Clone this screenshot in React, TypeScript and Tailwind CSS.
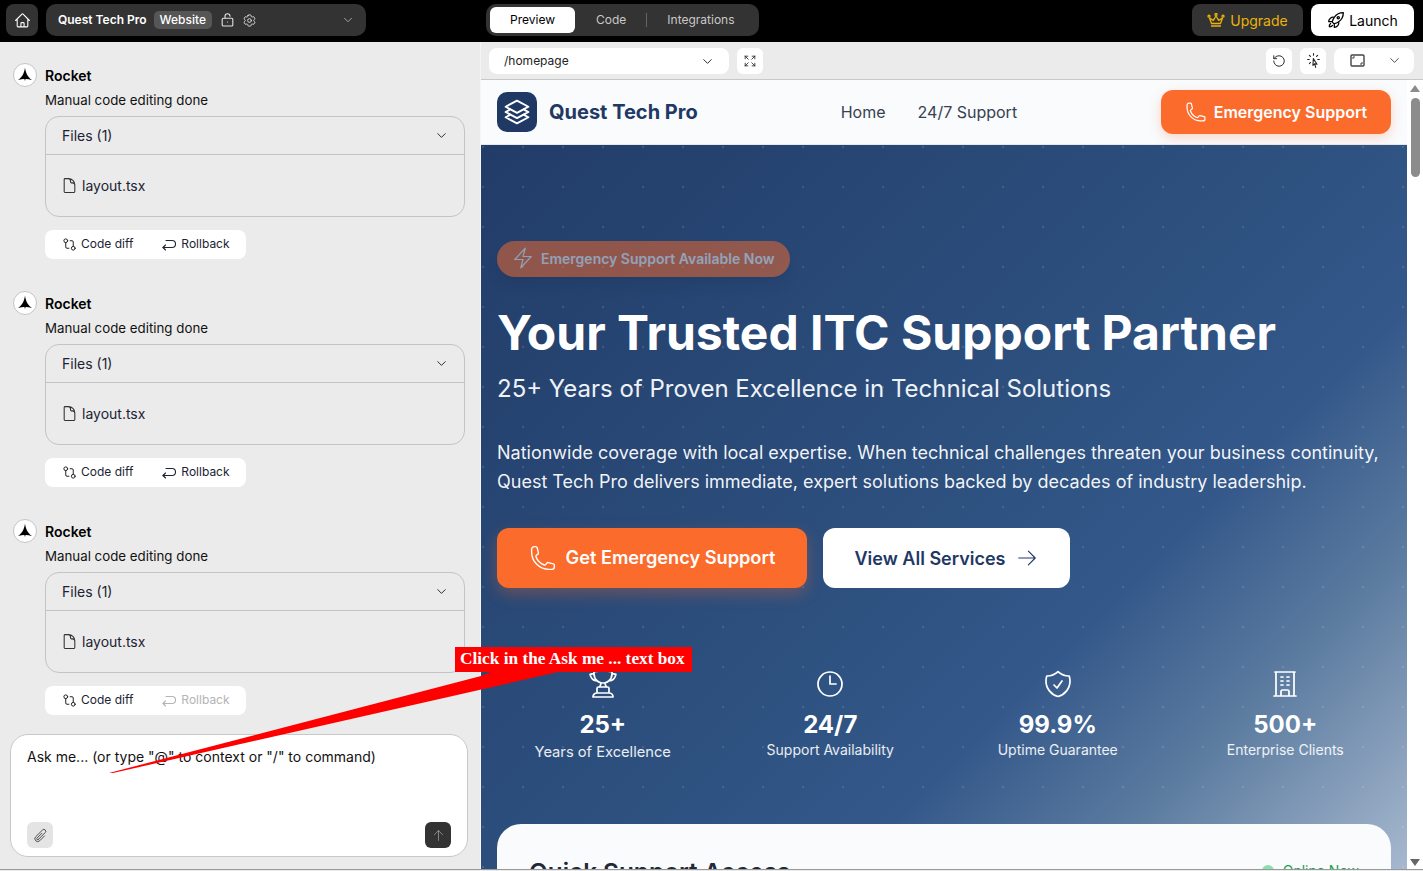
import React from "react";
import { RotateCcw, GitCompare, ChevronDown } from "lucide-react";
import {
  HiOutlineClock, HiOutlineShieldCheck, HiOutlineBuildingOffice, HiOutlineTrophy, HiOutlinePhone,
  HiOutlineBolt, HiOutlineArrowRight, HiOutlineSquare3Stack3D, HiOutlineHome, HiOutlineCog6Tooth,
  HiOutlineDocument, HiOutlineArrowsPointingOut, HiOutlineCursorArrowRays, HiOutlineRocketLaunch,
  HiOutlinePaperClip, HiOutlineArrowUp,
} from "react-icons/hi2";

function RocketMark() {
  return (
    <svg width="18" height="18" viewBox="0 0 18 18">
      <path d="M9 1.5 C9.6 6 11 10.5 16 14 C13 13.2 11 13 9.6 13 L9 15 L8.4 13 C7 13 5 13.2 2 14 C7 10.5 8.4 6 9 1.5Z" fill="#000" />
    </svg>
  );
}

function RollbackIcon() {
  return (
    <svg width="14" height="14" viewBox="0 0 14 14" fill="none" stroke="currentColor" strokeWidth="1.1" strokeLinecap="round" strokeLinejoin="round">
      <path d="M3.5 8 L1 10.5 L3.5 13" />
      <path d="M1 10.5 H10 A3.5 3.5 0 0 0 10 3.5 H4" />
    </svg>
  );
}

function ResizeIcon() {
  return (
    <svg width="15" height="13" viewBox="0 0 15 13" fill="none" stroke="#444" strokeWidth="1.4">
      <rect x="1" y="1" width="13" height="11" rx="1" />
      <path d="M3 5 V3 H5 M12 8 V10 H10" strokeWidth="1" />
    </svg>
  );
}

function OpenLock() {
  return (
    <svg width="13" height="14" viewBox="0 0 13 14" fill="none" stroke="#e2e2e2" strokeWidth="1.1" strokeLinecap="round">
      <rect x="1.2" y="5.2" width="10.6" height="7.8" rx="1" />
      <path d="M4 5 V3.2 A2.5 2.5 0 0 1 9 3.2" />
      <circle cx="6.5" cy="9" r="0.6" fill="#e2e2e2" stroke="none" />
    </svg>
  );
}

function CrownIcon() {
  return (
    <svg width="18" height="15" viewBox="0 0 18 15" fill="none" stroke="currentColor" strokeWidth="1.3" strokeLinejoin="round" strokeLinecap="round">
      <path d="M2.5 5 L4.5 10.5 H13.5 L15.5 5 L11.7 7.4 L9 3 L6.3 7.4 Z" />
      <path d="M4.5 13 H13.5" />
      <circle cx="2" cy="3.2" r="1" />
      <circle cx="9" cy="1.4" r="1" />
      <circle cx="16" cy="3.2" r="1" />
    </svg>
  );
}

function Message({ disabled }: { disabled?: boolean }) {
  return (
    <div className="flex gap-2">
      <div className="flex h-6 w-6 shrink-0 items-center justify-center rounded-full border border-[#c4c4c4] bg-white">
        <RocketMark />
      </div>
      <div className="flex flex-1 flex-col">
        <div className="mt-[4px] h-[18px] text-[14px] leading-[18px] font-semibold text-black">Rocket</div>
        <div className="mt-[6px] h-[18px] text-[13.3px] leading-[18px] text-[#111]">Manual code editing done</div>
        <div className="mt-[7px] rounded-[14px] border border-[#c4c4c4]">
          <div className="flex h-[38px] items-center justify-between border-b border-[#c4c4c4] pr-[15px] pl-[16px] text-[14px] text-[#1c2333]">
            <span>Files (1)</span>
            <ChevronDown size={15} strokeWidth={1.5} />
          </div>
          <div className="flex h-[61px] items-center gap-[4px] pl-[15px] text-[14px] text-[#1c2333]">
            <HiOutlineDocument size={17} className="text-[#333]" />
            <span>layout.tsx</span>
          </div>
        </div>
        <div className="mt-[13px] flex h-[29px] w-[201px] items-center rounded-[8px] bg-white pb-px pl-[17px] text-[12px] text-[#1c2333]">
          <GitCompare size={15} strokeWidth={1.6} className="mr-[4px] text-[#222]" />
          <span>Code diff</span>
          <span className={`ml-[29px] flex items-center gap-[5px] ${disabled ? "text-[#b4b4b4]" : ""}`}>
            <RollbackIcon />
            <span>Rollback</span>
          </span>
        </div>
      </div>
    </div>
  );
}

function Stat({ icon, value, label, first }: { icon: React.ReactNode; value: string; label: string; first?: boolean }) {
  return (
    <div className="flex flex-col items-center text-white">
      <div className="h-8">{icon}</div>
      <div className="mt-[9px] text-[24px] leading-8 font-bold">{value}</div>
      {first ? (
        <div className="mt-[1px] text-[14.7px] leading-5 text-white/90">{label}</div>
      ) : (
        <div className="-mt-px text-[14px] leading-5 text-white/90">{label}</div>
      )}
    </div>
  );
}

export default function App() {
  return (
    <div className="relative flex h-screen w-full flex-col overflow-hidden bg-[#ebebeb] pb-px font-['Inter',sans-serif]">
      <header className="flex h-[42px] shrink-0 items-center bg-black pr-[9px] pb-[2px] pl-[6px]">
        <button className="flex h-8 w-8 items-center justify-center rounded-[8px] bg-[#333] text-white">
          <HiOutlineHome size={17} />
        </button>
        <div className="ml-[8px] flex h-8 w-[320px] items-center rounded-[10px] bg-[#333] pr-[11px] pl-[12px] text-white">
          <span className="text-[12px] font-semibold">Quest Tech Pro</span>
          <span className="ml-[7px] rounded-[5px] bg-[#565656] px-[6px] py-[1px] text-[12px] leading-[16px] font-medium">Website</span>
          <span className="ml-[9px] flex"><OpenLock /></span>
          <HiOutlineCog6Tooth size={15} className="ml-[8px] text-[#ddd]" />
          <ChevronDown size={14} strokeWidth={1.4} className="ml-auto text-[#bbb]" />
        </div>
        <div className="ml-[120px] flex h-8 w-[273px] items-center rounded-[10px] bg-[#333] pl-[4px] text-[12px] text-[#c8c8c8]">
          <span className="flex h-[26px] w-[85px] items-center justify-center rounded-[6px] bg-white text-black">Preview</span>
          <span className="ml-[21px]">Code</span>
          <span className="ml-[20px] h-[14px] w-px bg-[#666]" />
          <span className="ml-[20px]">Integrations</span>
        </div>
        <button className="ml-auto flex h-8 w-[111px] items-center justify-center gap-[5px] rounded-[8px] bg-[#333] text-[14px] text-[#eab308]">
          <CrownIcon />
          <span className="mt-px">Upgrade</span>
        </button>
        <button className="ml-[8px] flex h-8 w-[103px] items-center justify-center gap-[4px] rounded-[8px] bg-white text-[14px] text-black">
          <HiOutlineRocketLaunch size={18} strokeWidth={1.7} />
          <span className="mt-px">Launch</span>
        </button>
      </header>

      <div className="flex min-h-0 flex-1 border-b border-[#999]">
        <aside className="flex w-[480px] shrink-0 flex-col">
          <div className="flex flex-1 flex-col gap-[32px] overflow-hidden pt-[21px] pr-[15px] pl-[13px]">
            <Message />
            <Message />
            <Message disabled />
          </div>
          <div className="mr-[12px] mb-[12px] ml-[10px] flex h-[123px] flex-col rounded-[18px] border border-[#c8c8c8] bg-white px-[16px] pt-[13px] pb-[8px]">
            <div className="text-[14px] leading-[18px] text-[#111]">Ask me... (or type "@" to context or "/" to command)</div>
            <div className="mt-auto flex items-center justify-between">
              <span className="flex h-[26px] w-[26px] items-center justify-center rounded-[6px] bg-[#e4e4e4] text-[#444]">
                <HiOutlinePaperClip size={15} />
              </span>
              <span className="flex h-[26px] w-[26px] items-center justify-center rounded-[6px] bg-[#333] text-[#999]">
                <HiOutlineArrowUp size={13} />
              </span>
            </div>
          </div>
        </aside>

        <main className="flex min-w-0 flex-1 flex-col border-l border-[#f5f5f5]">
          <div className="flex h-[38px] shrink-0 items-center border-b border-[#c8c8c8] pr-[9px] pl-[8px]">
            <div className="flex h-[26px] w-[240px] items-center justify-between rounded-[8px] bg-white pt-px pr-[14px] pl-[15px] text-[12px] text-[#222]">
              <span>/homepage</span>
              <ChevronDown size={15} strokeWidth={1.5} />
            </div>
            <span className="ml-[8px] flex h-[26px] w-[26px] items-center justify-center rounded-[6px] bg-white text-[#333]">
              <HiOutlineArrowsPointingOut size={14} />
            </span>
            <span className="ml-auto flex h-[26px] w-[26px] items-center justify-center rounded-[6px] bg-white text-[#222]">
              <RotateCcw size={14} strokeWidth={1.6} />
            </span>
            <span className="ml-[8px] flex h-[26px] w-[26px] items-center justify-center rounded-[6px] bg-white text-[#222]">
              <HiOutlineCursorArrowRays size={17} />
            </span>
            <span className="ml-[8px] flex h-[26px] w-[80px] items-center justify-between rounded-[8px] bg-white pr-[12px] pl-[16px]">
              <ResizeIcon />
              <ChevronDown size={15} strokeWidth={1.5} className="text-[#444]" />
            </span>
          </div>

          <div className="flex min-h-0 flex-1">
            <div className="min-w-0 flex-1 overflow-hidden">
              <nav className="flex h-[65px] items-center border-b border-[#e6e8ec] bg-[#f9fbfd] pr-[16px] pl-[16px]">
                <div className="flex h-10 w-10 items-center justify-center rounded-[10px] bg-[#1f3864] text-white">
                  <HiOutlineSquare3Stack3D size={28} strokeWidth={1.7} />
                </div>
                <span className="ml-[12px] text-[20px] font-bold text-[#1f3864]">Quest Tech Pro</span>
                <span className="ml-[143px] text-[16px] text-[#374151]">Home</span>
                <span className="ml-[32px] text-[16px] text-[#374151]">24/7 Support</span>
                <button className="ml-auto flex h-[44px] w-[230px] items-center justify-center gap-[7px] rounded-[12px] bg-[#fb6b2b] text-[16px] font-semibold text-white shadow-[0_4px_12px_rgba(251,107,43,0.25)]">
                  <HiOutlinePhone size={22} strokeWidth={1.3} />
                  <span>Emergency Support</span>
                </button>
              </nav>

              <section className="h-[830px] bg-[radial-gradient(circle_at_2px_2px,rgba(255,255,255,0.12)_1px,transparent_1.2px),linear-gradient(135deg,#223c68_0%,#2e5281_50%,#34588a_62%,#5c7ca0_76%,#a3b5cc_93%,#e2e8f0_108%)] [background-size:40px_40px,100%_100%] px-[16px] pt-[96px]">
                <div className="flex h-[36px] w-[293px] items-center gap-[6px] rounded-full bg-[#fb6b2b] pb-[2px] pl-[14px] text-[14px] font-semibold text-white opacity-50 shadow-lg">
                  <HiOutlineBolt size={24} strokeWidth={1.2} />
                  <span>Emergency Support Available Now</span>
                </div>
                <h1 className="mt-[27px] text-[48px] leading-[58px] font-bold text-white">Your Trusted ITC Support Partner</h1>
                <p className="mt-[11px] text-[24px] leading-8 text-[#eef2f7]">25+ Years of Proven Excellence in Technical Solutions</p>
                <p className="mt-[33px] text-[18px] leading-[29px] text-white/95">
                  Nationwide coverage with local expertise. When technical challenges threaten your business continuity,<br />
                  Quest Tech Pro delivers immediate, expert solutions backed by decades of industry leadership.
                </p>
                <div className="mt-[32px] flex gap-[16px]">
                  <button className="flex h-[60px] w-[310px] items-center justify-center gap-[9px] rounded-[12px] bg-[#fb6b2b] text-[18.2px] font-semibold text-white shadow-[0_6px_16px_rgba(251,107,43,0.3)]">
                    <HiOutlinePhone size={28} strokeWidth={1.2} />
                    <span>Get Emergency Support</span>
                  </button>
                  <button className="flex h-[60px] w-[247px] items-center justify-center gap-[11px] rounded-[12px] bg-white text-[18px] font-semibold text-[#1f3864]">
                    <span>View All Services</span>
                    <HiOutlineArrowRight size={22} strokeWidth={1.2} />
                  </button>
                </div>
                <div className="mt-[80px] grid grid-cols-4 gap-8 px-2">
                  <Stat first icon={<HiOutlineTrophy size={32} strokeWidth={1.3} />} value="25+" label="Years of Excellence" />
                  <Stat icon={<HiOutlineClock size={32} strokeWidth={1.3} />} value="24/7" label="Support Availability" />
                  <Stat icon={<HiOutlineShieldCheck size={32} strokeWidth={1.3} />} value="99.9%" label="Uptime Guarantee" />
                  <Stat icon={<HiOutlineBuildingOffice size={32} strokeWidth={1.3} />} value="500+" label="Enterprise Clients" />
                </div>
                <div className="mt-[62px] flex h-[200px] items-start justify-between rounded-[24px] bg-[#f9fbfd] px-[32px] pt-[32px]">
                  <span className="text-[24.3px] leading-8 font-semibold text-[#1f2937]">Quick Support Access</span>
                  <span className="mt-[4px] flex items-center gap-[9px] text-[14px] text-[#16a34a]">
                    <span className="h-[12px] w-[12px] rounded-full bg-[#22c55e] opacity-50" />
                    Online Now
                  </span>
                </div>
              </section>
            </div>

            <div className="flex w-[16px] shrink-0 flex-col items-center bg-white">
              <span className="mt-[5px] h-0 w-0 border-x-[5px] border-b-[7px] border-x-transparent border-b-[#8c8c8c]" />
              <span className="mt-[6px] h-[79px] w-[9px] rounded-full bg-[#8c8c8c]" />
              <span className="mt-auto mb-[3px] h-0 w-0 border-x-[5px] border-t-[7px] border-x-transparent border-t-[#666]" />
            </div>
          </div>
        </main>
      </div>

      <svg className="pointer-events-none absolute top-0 left-0" width="1423" height="871">
        <polygon points="491,672 558,672 113,773 109,773 481,676" fill="#ff0000" />
      </svg>
      <div className="absolute top-[647px] left-[455px] flex h-[25px] w-[237px] items-center bg-[#ff0000] pb-[2px] pl-[5px] font-['Liberation_Serif',serif] text-[17.3px] font-bold text-white">
        Click in the Ask me ... text box
      </div>
    </div>
  );
}
